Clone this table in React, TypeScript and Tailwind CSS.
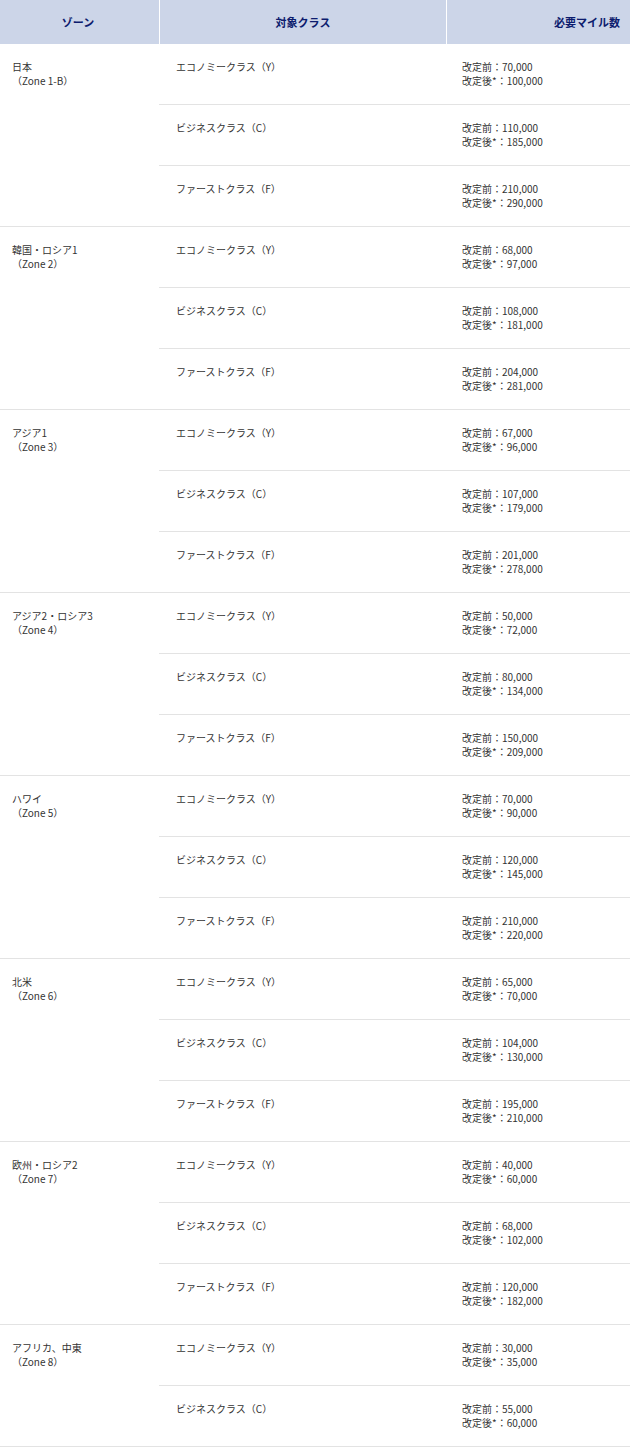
import React from "react";

type Row = { cls: string; before: string; after: string };
type Zone = { name: string; zone: string; rows: Row[] };

const E = "エコノミークラス（Y）";
const B = "ビジネスクラス（C）";
const F = "ファーストクラス（F）";

const zones: Zone[] = [
  { name: "日本", zone: "（Zone 1-B）", rows: [
    { cls: E, before: "70,000", after: "100,000" },
    { cls: B, before: "110,000", after: "185,000" },
    { cls: F, before: "210,000", after: "290,000" },
  ]},
  { name: "韓国・ロシア1", zone: "（Zone 2）", rows: [
    { cls: E, before: "68,000", after: "97,000" },
    { cls: B, before: "108,000", after: "181,000" },
    { cls: F, before: "204,000", after: "281,000" },
  ]},
  { name: "アジア1", zone: "（Zone 3）", rows: [
    { cls: E, before: "67,000", after: "96,000" },
    { cls: B, before: "107,000", after: "179,000" },
    { cls: F, before: "201,000", after: "278,000" },
  ]},
  { name: "アジア2・ロシア3", zone: "（Zone 4）", rows: [
    { cls: E, before: "50,000", after: "72,000" },
    { cls: B, before: "80,000", after: "134,000" },
    { cls: F, before: "150,000", after: "209,000" },
  ]},
  { name: "ハワイ", zone: "（Zone 5）", rows: [
    { cls: E, before: "70,000", after: "90,000" },
    { cls: B, before: "120,000", after: "145,000" },
    { cls: F, before: "210,000", after: "220,000" },
  ]},
  { name: "北米", zone: "（Zone 6）", rows: [
    { cls: E, before: "65,000", after: "70,000" },
    { cls: B, before: "104,000", after: "130,000" },
    { cls: F, before: "195,000", after: "210,000" },
  ]},
  { name: "欧州・ロシア2", zone: "（Zone 7）", rows: [
    { cls: E, before: "40,000", after: "60,000" },
    { cls: B, before: "68,000", after: "102,000" },
    { cls: F, before: "120,000", after: "182,000" },
  ]},
  { name: "アフリカ、中東", zone: "（Zone 8）", rows: [
    { cls: E, before: "30,000", after: "35,000" },
    { cls: B, before: "55,000", after: "60,000" },
  ]},
];

export default function App() {
  return (
    <div
      className="w-[630px] bg-white text-[#333333] text-[10px] leading-[14px]"
      style={{ fontFamily: '"Noto Sans CJK JP", "Noto Sans", sans-serif' }}
    >
      <div className="flex h-[44px] bg-[#ccd5e8] text-[#0c1c6e] text-[11px] font-bold">
        <div className="w-[159px] flex items-center justify-center pr-[3px]">ゾーン</div>
        <div className="w-[287px] border-l border-white flex items-center justify-center">対象クラス</div>
        <div className="flex-1 border-l border-white flex items-center justify-end pr-[10px]">必要マイル数</div>
      </div>
      {zones.map((z) => (
        <div key={z.zone} className="flex border-b border-[#e3e3e3]">
          <div className="w-[159px] pl-[12px] pt-[16px]">
            <div>{z.name}</div>
            <div>{z.zone}</div>
          </div>
          <div className="flex-1 flex flex-col">
            {z.rows.map((r, i) => (
              <div
                key={r.cls}
                className={
                  i < z.rows.length - 1
                    ? "flex h-[61px] border-b border-[#e3e3e3]"
                    : "flex h-[60px]"
                }
              >
                <div className="w-[287px] pl-[17px] pt-[16px]">{r.cls}</div>
                <div className="flex-1 pl-[16px] pt-[16px]">
                  <div>改定前：{r.before}</div>
                  <div>改定後*：{r.after}</div>
                </div>
              </div>
            ))}
          </div>
        </div>
      ))}
    </div>
  );
}
